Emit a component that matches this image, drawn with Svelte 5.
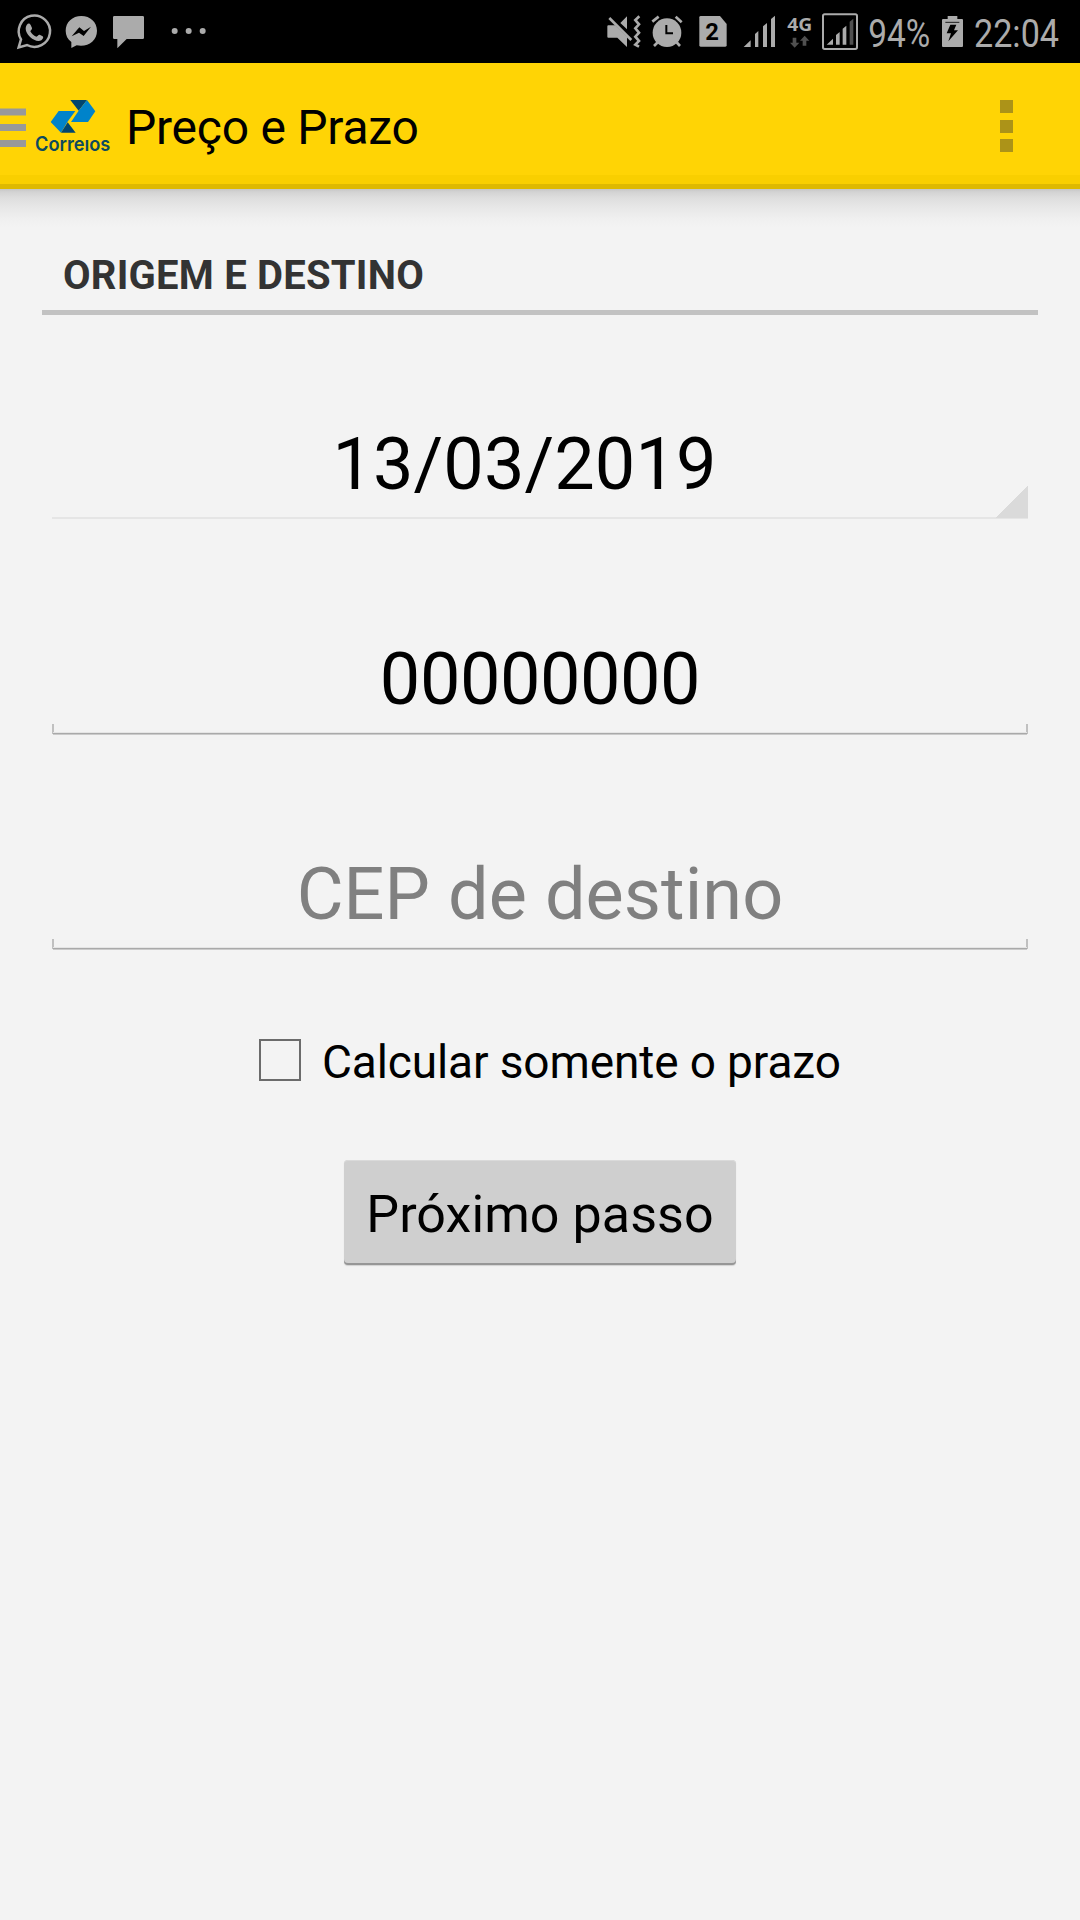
<script>
  let date = $state('13/03/2019');
  let origin = $state('00000000');
  let destination = $state('');
  let deadlineOnly = $state(false);
</script>

<div class="screen">
  <div class="status">
    <svg class="notifications" viewBox="0 0 690 189" aria-hidden="true">
      <path d="M56 142l7-24a47 47 0 1 1 18 17z" fill="none" stroke="#ababab" stroke-width="7.5" stroke-linejoin="miter" />
      <path d="M80 75c5-6 9-5 12 0l4 9c1 4-4 7-5 10 4 8 10 13 18 16 4-1 6-7 10-6l9 5c4 3 0 9-4 12-10 6-24-1-33-9-9-9-19-24-11-37z" fill="#ababab" />
      <path d="M244 48c-27 0-47 19-47 44 0 14 6 26 17 34v18l16-8c32 7 61-13 61-44 0-25-20-44-47-44z" fill="#ababab" />
      <path d="M215 109l23-27 14 11 21-13-22 28-14-10z" fill="#000" />
      <path d="M343 48h85q4 0 4 4v61q0 4-4 4h-48l-28 28v-28h-9q-4 0-4-4V52q0-4 4-4z" fill="#ababab" />
      <g fill="#ababab"><circle cx="524" cy="93" r="9" /><circle cx="566" cy="93" r="9" /><circle cx="608" cy="93" r="9" /></g>
    </svg>
    <svg class="indicators" viewBox="0 0 1470 189">
      <g fill="#ababab">
        <path d="M55 76h20l36 35v30l-29-28H55q-3 0-3-3V79q0-3 3-3zM91 69l20-20v39z" />
        <path d="M58 54l66 66" stroke="#ababab" stroke-width="8" />
        <path d="M148 49l-12 11 11 13-11 12 11 13-11 12 11 13-11 11 11 6" fill="none" stroke="#ababab" stroke-width="8" />
        <circle cx="231" cy="98" r="43" />
        <path d="M187 65l19-15M257 50l18 17M204 126l-12 12M259 126l11 12" stroke="#ababab" stroke-width="8" />
        <path d="M229 75v25h20" fill="none" stroke="#000" stroke-width="6" />
        <path d="M332 48h58l20 24v64q0 4-4 4h-74q-4 0-4-4V52q0-4 4-4z" />
        <text x="346" y="121" class="sim" textLength="41" lengthAdjust="spacingAndGlyphs">2</text>
        <path d="M461 141l21-20v20zM495 141v-39l10-9v48zM519 141V79l12-10v72zM543 141V57l12-10v94z" />
        <text x="592" y="94" class="network" textLength="75" lengthAdjust="spacingAndGlyphs">4G</text>
        <path d="M608 113h11v15h9l-14 15-14-15h8zM638 137v-15h-8l14-15 14 15h-9v15z" fill="#505050" />
        <rect x="699" y="43" width="102" height="104" rx="5" fill="none" stroke="#ababab" stroke-width="6" />
        <path d="M710 134l19-18v18zM738 134v-29l11-9v38zM758 134V86l11-9v57z" />
        <path d="M779 134V65l11-9v78z" fill="#505050" />
        <text x="835" y="141" class="clock" textLength="186" lengthAdjust="spacingAndGlyphs">94%</text>
        <path d="M1073 48h29v9h14q3 0 3 3v78q0 3-3 3h-57q-3 0-3-3V60q0-3 3-3h14z" />
        <path d="M1066 67h42" stroke="#000" stroke-width="2.5" />
        <path d="M1081 74h18l-7 17h12l-29 33 8-24h-13z" fill="#000" />
        <text x="1152" y="141" class="clock" textLength="255" lengthAdjust="spacingAndGlyphs">22:04</text>
      </g>
    </svg>
  </div>

  <header class="bar">
    <svg class="drawer" viewBox="0 0 26 40" aria-hidden="true">
      <path d="M0 1.5h26v7H0zM0 17h26v7H0zM0 33h26v7H0z" fill="#999" />
    </svg>
    <svg class="logo" viewBox="108 58 222 180" aria-label="Correios">
      <path d="M211 61h50l-25 32z" fill="#00456f" />
      <path d="M261 61l25 34-22 32h-51l23-34z" fill="#0083ca" />
      <path d="M176 94h50l-24 33-19 32-31-32z" fill="#0083ca" />
      <path d="M203 128l24 31h-44z" fill="#00456f" />
      <text x="105" y="213" class="brand" textLength="226" lengthAdjust="spacingAndGlyphs">Correıos</text>
    </svg>
    <h1>Preço e Prazo</h1>
    <button class="more" aria-label="Mais opções"><i></i><i></i><i></i></button>
  </header>

  <main>
    <h2>ORIGEM E DESTINO</h2>
    <button class="spinner">{date}</button>
    <input class="field code" bind:value={origin} />
    <input class="field" placeholder="CEP de destino" bind:value={destination} />
    <label class="option">
      <input type="checkbox" bind:checked={deadlineOnly} />
      <span>Calcular somente o prazo</span>
    </label>
    <button class="next">Próximo passo</button>
  </main>
</div>

<style>
  :global(body) {
    margin: 0;
    background: #f3f3f3;
  }
  .screen {
    display: flex;
    flex-direction: column;
    width: 1080px;
    height: 1920px;
    overflow: hidden;
    background: #f3f3f3;
    color: #000;
    font-family: Roboto, sans-serif;
  }
  button,
  input {
    margin: 0;
    padding: 0;
    border: 0;
    border-radius: 0;
    background: none;
    box-sizing: border-box;
    color: inherit;
    font-family: inherit;
    outline: none;
  }
  svg {
    display: block;
    flex: none;
  }
  .status {
    display: flex;
    justify-content: space-between;
    height: 63px;
    flex: none;
    background: #000;
  }
  .notifications {
    width: 230px;
    height: 63px;
  }
  .indicators {
    width: 490px;
    height: 63px;
  }
  .clock {
    font-size: 118px;
  }
  .sim {
    font-size: 69px;
    font-weight: 700;
    fill: #000;
  }
  .network {
    font-family: 'Open Sans', sans-serif;
    font-size: 53px;
    font-weight: 700;
  }
  .bar {
    display: flex;
    align-items: center;
    height: 126px;
    flex: none;
    background: linear-gradient(#ffd405 112px, #f9cf00 112px 121px, #deb900 121px);
  }
  .drawer {
    width: 26px;
    height: 40px;
    margin-top: -3px;
    padding-top: 4px;
  }
  .logo {
    width: 74px;
    height: 60px;
    margin: 6px 0 0 10px;
    overflow: visible;
  }
  .brand {
    font-family: Inter, sans-serif;
    font-size: 60px;
    font-weight: 600;
    fill: #0d4a5e;
  }
  h1 {
    flex: 1;
    margin: 0;
    padding: 3px 0 0 16px;
    font-size: 48px;
    font-weight: 400;
    line-height: 60px;
    letter-spacing: -0.25px;
  }
  .more {
    display: flex;
    flex-direction: column;
    gap: 6.5px;
    margin-right: 67px;
  }
  .more i {
    width: 13px;
    height: 13px;
    background: #ac9318;
  }
  main {
    display: flex;
    flex: 1;
    flex-direction: column;
    align-items: center;
    padding: 52px 42px 0;
    background: linear-gradient(#c6c6c6, #d3d3d3 3px, #dedede 9px, #e7e7e7 18px, #efefef 29px, #f3f3f3 38px);
  }
  h2 {
    align-self: stretch;
    height: 69px;
    margin: 0;
    padding-left: 21px;
    border-bottom: 5px solid #c2c2c2;
    color: #333;
    font-size: 40px;
    font-weight: 700;
    line-height: 69px;
    letter-spacing: 0.22px;
  }
  .spinner {
    width: 976px;
    height: 109px;
    margin-top: 95px;
    padding-right: 31px;
    background:
      linear-gradient(135deg, transparent 50%, #dadada 50%) right bottom 1px / 32px 32px no-repeat,
      linear-gradient(#e5e5e5, #e5e5e5) bottom / 100% 2px no-repeat;
    font-size: 72px;
    line-height: 109px;
    letter-spacing: 0.1px;
  }
  .field {
    width: 976px;
    height: 111px;
    margin-top: 105px;
    background:
      linear-gradient(#e5e5e5 1px, #a9a9a9 1px 2px, #cacaca 2px) bottom / 974px 3px no-repeat,
      linear-gradient(#c0c0c0, #c0c0c0) left bottom 1px / 2px 10px no-repeat,
      linear-gradient(#c0c0c0, #c0c0c0) right bottom 1px / 2px 10px no-repeat;
    font-size: 72px;
    line-height: 111px;
    letter-spacing: 0.08px;
    text-align: center;
  }
  .code {
    letter-spacing: -0.43px;
  }
  .field + .field {
    margin-top: 104px;
  }
  .field::placeholder {
    color: #808080;
    opacity: 1;
  }
  .option {
    display: flex;
    align-items: center;
    align-self: flex-start;
    height: 60px;
    margin: 80px 0 0 217px;
    font-size: 46px;
    line-height: 56px;
    letter-spacing: -0.12px;
    white-space: nowrap;
  }
  .option input {
    appearance: none;
    width: 42px;
    height: 42px;
    margin-right: 21px;
    border: 2px solid #6b6b6b;
  }
  .option span {
    padding-top: 4px;
  }
  .next {
    width: 392px;
    height: 105px;
    margin-top: 70px;
    padding-top: 4px;
    border-radius: 4px;
    background: #cfcfcf;
    box-shadow: inset 0 -2px #969696, inset 0 1px #dadada, 0 1px 1px #d2d2d2;
    font-size: 52px;
    line-height: 101px;
    letter-spacing: 0.08px;
    white-space: nowrap;
  }
</style>
